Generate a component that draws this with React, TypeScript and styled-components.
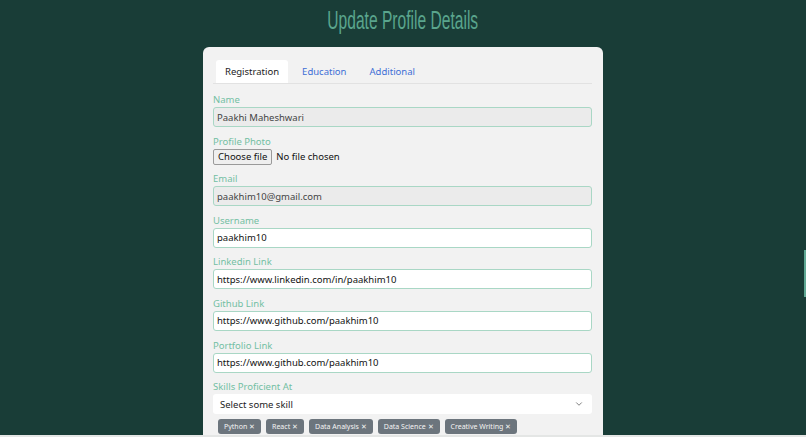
import { createGlobalStyle, styled } from "styled-components";
import { ChevronDown } from "lucide-react";

const GlobalStyle = createGlobalStyle`
  html {
    background: #e4e6e5;
  }
  body {
    margin: 0;
    font-family: "Noto Sans", "Open Sans", sans-serif;
  }
`;

const Page = styled.div`
  height: 435px;
  overflow: hidden;
  background: #193d37;
  display: flex;
  flex-direction: column;
  align-items: center;
`;

const TitleBox = styled.div`
  flex-shrink: 0;
  height: 47px;
  display: flex;
  justify-content: center;
`;

const Title = styled.h1`
  margin: 5px 0 0;
  font-family: "Liberation Sans", sans-serif;
  font-weight: 400;
  font-size: 26px;
  line-height: 30px;
  color: #5aa58d;
  transform: scaleX(0.6);
  white-space: nowrap;
`;

const Card = styled.div`
  flex-shrink: 0;
  width: 400px;
  box-sizing: border-box;
  background: #f2f2f2;
  border-radius: 6px;
  padding: 13px 11px 20px 10px;
`;

const TabBar = styled.div`
  display: flex;
  padding-left: 3px;
  border-bottom: 1px solid #e2e2e2;
  margin-bottom: 9px;
`;

const Tab = styled.div<{ $active?: boolean }>`
  height: 23px;
  padding: 0 9px;
  margin-right: 5px;
  display: flex;
  align-items: center;
  font-size: 9.5px;
  border-radius: 3px 3px 0 0;
  background: ${(p) => (p.$active ? "#ffffff" : "transparent")};
  color: ${(p) => (p.$active ? "#222222" : "#3d6fd6")};
`;

const Field = styled.div`
  display: flex;
  flex-direction: column;
  margin-bottom: 7.6px;
`;

const Label = styled.label`
  font-size: 9.5px;
  line-height: 13px;
  color: #72bfa3;
  margin-bottom: 1px;
`;

const Input = styled.div<{ $disabled?: boolean }>`
  height: 20px;
  box-sizing: border-box;
  border: 1px solid #a9d7c5;
  border-radius: 3px;
  background: ${(p) => (p.$disabled ? "#ebebeb" : "#ffffff")};
  color: ${(p) => (p.$disabled ? "#444444" : "#111111")};
  font-size: 9.5px;
  display: flex;
  align-items: center;
  padding-left: 3px;
`;

const FileRow = styled.div`
  display: flex;
  align-items: center;
  gap: 4px;
  font-size: 9.5px;
  color: #111111;
`;

const FileButton = styled.div`
  height: 16px;
  box-sizing: border-box;
  padding: 0 4px;
  border: 1px solid #9a9a9a;
  border-radius: 2px;
  background: #efefef;
  display: flex;
  align-items: center;
`;

const Select = styled.div`
  height: 20px;
  box-sizing: border-box;
  border-radius: 3px;
  background: #ffffff;
  display: flex;
  align-items: center;
  justify-content: space-between;
  padding: 0 8px 0 7px;
  font-size: 9.5px;
  color: #222222;
  svg {
    color: #666666;
  }
`;

const TagRow = styled.div`
  display: flex;
  gap: 5px;
  padding: 5px 0 0 5px;
`;

const Tag = styled.div`
  height: 15px;
  padding: 0 6px;
  border-radius: 3px;
  background: #6c757d;
  color: #f4f4f4;
  font-size: 7px;
  display: flex;
  align-items: center;
`;

const ScrollThumb = styled.div`
  position: fixed;
  right: 0;
  top: 250px;
  width: 2px;
  height: 47px;
  background: #5fa894;
`;

const fields = [
  { label: "Email", value: "paakhim10@gmail.com", disabled: true },
  { label: "Username", value: "paakhim10" },
  { label: "Linkedin Link", value: "https://www.linkedin.com/in/paakhim10" },
  { label: "Github Link", value: "https://www.github.com/paakhim10" },
  { label: "Portfolio Link", value: "https://www.github.com/paakhim10" },
];

const skills = ["Python", "React", "Data Analysis", "Data Science", "Creative Writing"];

export default function App() {
  return (
    <>
      <GlobalStyle />
      <Page>
        <TitleBox>
          <Title>Update Profile Details</Title>
        </TitleBox>
        <Card>
          <TabBar>
            <Tab $active>Registration</Tab>
            <Tab>Education</Tab>
            <Tab>Additional</Tab>
          </TabBar>
          <Field>
            <Label>Name</Label>
            <Input $disabled>Paakhi Maheshwari</Input>
          </Field>
          <Field>
            <Label>Profile Photo</Label>
            <FileRow>
              <FileButton>Choose file</FileButton>
              No file chosen
            </FileRow>
          </Field>
          {fields.map((f) => (
            <Field key={f.label}>
              <Label>{f.label}</Label>
              <Input $disabled={f.disabled}>{f.value}</Input>
            </Field>
          ))}
          <Field>
            <Label>Skills Proficient At</Label>
            <Select>
              Select some skill
              <ChevronDown size={10} strokeWidth={2} />
            </Select>
            <TagRow>
              {skills.map((s) => (
                <Tag key={s}>{s} ✕</Tag>
              ))}
            </TagRow>
          </Field>
        </Card>
      </Page>
      <ScrollThumb />
    </>
  );
}
